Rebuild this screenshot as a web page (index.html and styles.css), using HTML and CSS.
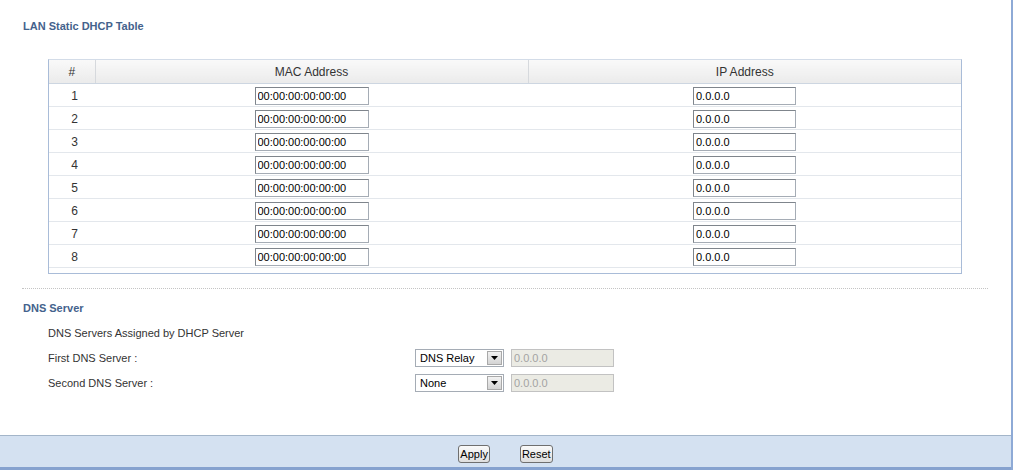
FILE: index.html
```html
<!DOCTYPE html>
<html lang="en">
<head>
    <meta charset="UTF-8">
    <title>LAN Static DHCP Table</title>
    <link rel="stylesheet" href="styles.css">
</head>
<body>
<div class="page">
    <div class="content">
        <h2 class="section-title">LAN Static DHCP Table</h2>

        <div class="table-box">
            <table class="dhcp-table">
                <colgroup>
                    <col class="col-num">
                    <col class="col-mac">
                    <col>
                </colgroup>
                <thead>
                    <tr>
                        <th>#</th>
                        <th>MAC Address</th>
                        <th>IP Address</th>
                    </tr>
                </thead>
                <tbody>
                    <tr><td class="num">1</td><td><input class="mac" type="text" value="00:00:00:00:00:00"></td><td><input class="ip" type="text" value="0.0.0.0"></td></tr>
                    <tr><td class="num">2</td><td><input class="mac" type="text" value="00:00:00:00:00:00"></td><td><input class="ip" type="text" value="0.0.0.0"></td></tr>
                    <tr><td class="num">3</td><td><input class="mac" type="text" value="00:00:00:00:00:00"></td><td><input class="ip" type="text" value="0.0.0.0"></td></tr>
                    <tr><td class="num">4</td><td><input class="mac" type="text" value="00:00:00:00:00:00"></td><td><input class="ip" type="text" value="0.0.0.0"></td></tr>
                    <tr><td class="num">5</td><td><input class="mac" type="text" value="00:00:00:00:00:00"></td><td><input class="ip" type="text" value="0.0.0.0"></td></tr>
                    <tr><td class="num">6</td><td><input class="mac" type="text" value="00:00:00:00:00:00"></td><td><input class="ip" type="text" value="0.0.0.0"></td></tr>
                    <tr><td class="num">7</td><td><input class="mac" type="text" value="00:00:00:00:00:00"></td><td><input class="ip" type="text" value="0.0.0.0"></td></tr>
                    <tr><td class="num">8</td><td><input class="mac" type="text" value="00:00:00:00:00:00"></td><td><input class="ip" type="text" value="0.0.0.0"></td></tr>
                </tbody>
            </table>
        </div>

        <div class="divider"></div>

        <h2 class="section-title">DNS Server</h2>
        <div class="form-rows">
            <div class="form-row">
                <span class="label">DNS Servers Assigned by DHCP Server</span>
            </div>
            <div class="form-row">
                <span class="label">First DNS Server :</span>
                <span class="select-wrap">
                    <select class="select">
                        <option>DNS Relay</option>
                        <option>None</option>
                    </select>
                    <span class="select-arrow">
                        <svg width="7" height="4" viewBox="0 0 7 4"><path d="M0 0h7L3.5 4z" fill="#000"/></svg>
                    </span>
                </span>
                <input class="ip-disabled" type="text" value="0.0.0.0" disabled>
            </div>
            <div class="form-row">
                <span class="label">Second DNS Server :</span>
                <span class="select-wrap">
                    <select class="select">
                        <option>None</option>
                        <option>DNS Relay</option>
                    </select>
                    <span class="select-arrow">
                        <svg width="7" height="4" viewBox="0 0 7 4"><path d="M0 0h7L3.5 4z" fill="#000"/></svg>
                    </span>
                </span>
                <input class="ip-disabled" type="text" value="0.0.0.0" disabled>
            </div>
        </div>
    </div>

    <div class="footer">
        <button class="btn" type="button">Apply</button>
        <button class="btn" type="button">Reset</button>
    </div>
</div>
</body>
</html>
```

FILE: styles.css
```css
body {
    margin: 0;
    font-family: "Liberation Sans", Arial, sans-serif;
    font-size: 11px;
    color: #333333;
    background-color: #ffffff;
}
.page {
    display: flex;
    flex-direction: column;
    width: 1011px;
    height: 470px;
    border-right: 2px solid #8eaad6;
}
.content {
    flex: 1;
    padding-top: 19px;
}
.section-title {
    margin: 0 0 0 23px;
    font-size: 11px;
    line-height: 14px;
    font-weight: bold;
    color: #44628c;
}

/* static lease table */
.table-box {
    width: 912px;
    margin: 26px 0 0 48px;
    padding-bottom: 5px;
    border: 1px solid #a9bcd8;
    border-top-color: #d3dce8;
}
.dhcp-table {
    width: 100%;
    border-collapse: collapse;
    table-layout: fixed;
}
.col-num {
    width: 46px;
}
.col-mac {
    width: 433px;
}
.dhcp-table th {
    height: 23px;
    padding: 0;
    font-size: 12px;
    font-weight: normal;
    color: #333333;
    background: linear-gradient(#f9f9f9, #ebebeb);
    border-bottom: 1px solid #cdd6e1;
    border-left: 1px solid #d6d9dd;
}
.dhcp-table th:first-child {
    border-left: none;
}
.dhcp-table td {
    height: 20px;
    padding: 2px 0 0;
    text-align: center;
    border-bottom: 1px solid #e3e7ec;
}
.dhcp-table td.num {
    font-size: 12px;
    padding-left: 5px;
}
.mac,
.ip {
    box-sizing: border-box;
    height: 18px;
    margin: 0;
    padding: 0 2px;
    font-family: "Liberation Sans", Arial, sans-serif;
    font-size: 11px;
    color: #000000;
    border: 1px solid #a5acb5;
    border-top-color: #7f858c;
    border-left-color: #7f858c;
    vertical-align: middle;
}
.mac {
    width: 114px;
}
.ip {
    width: 103px;
}

.divider {
    margin: 14px 23px 12px 22px;
    border-top: 1px dotted #c4c4c4;
}

/* DNS settings */
.form-rows {
    padding-top: 5px;
}
.form-row {
    display: flex;
    align-items: center;
    height: 25px;
    padding-left: 48px;
}
.label {
    width: 367px;
}
.select-wrap {
    position: relative;
    display: inline-block;
    width: 89px;
    height: 18px;
}
.select {
    box-sizing: border-box;
    width: 100%;
    height: 18px;
    margin: 0;
    padding: 0 0 0 4px;
    font-family: "Liberation Sans", Arial, sans-serif;
    font-size: 11px;
    color: #000000;
    background-color: #ffffff;
    border: 1px solid #a5acb5;
    border-radius: 0;
    appearance: none;
    -webkit-appearance: none;
}
.select-arrow {
    position: absolute;
    top: 2px;
    right: 2px;
    display: flex;
    align-items: center;
    justify-content: center;
    box-sizing: border-box;
    width: 15px;
    height: 14px;
    background: linear-gradient(#f2f2f2, #d4d4d4);
    border: 1px solid #a9a9a9;
    pointer-events: none;
}
.ip-disabled {
    box-sizing: border-box;
    width: 103px;
    height: 18px;
    margin: 0 0 0 7px;
    padding: 0 2px;
    font-family: "Liberation Sans", Arial, sans-serif;
    font-size: 11px;
    color: #a3a3a3;
    background-color: #ebebe4;
    border: 1px solid #c2c2c2;
}

.footer {
    display: flex;
    justify-content: center;
    align-items: center;
    gap: 30px;
    height: 27px;
    padding-top: 4px;
    background-color: #d4e1f1;
    border-top: 1px solid #a3b5c9;
    border-bottom: 3px solid #86a2cf;
}
.btn {
    height: 18px;
    margin: 0;
    padding: 0 1px;
    font-family: "Liberation Sans", Arial, sans-serif;
    font-size: 11px;
    color: #000000;
    background: linear-gradient(#fafafa, #dedede);
    border: 1px solid #6f6f6f;
    border-radius: 3px;
}
```
